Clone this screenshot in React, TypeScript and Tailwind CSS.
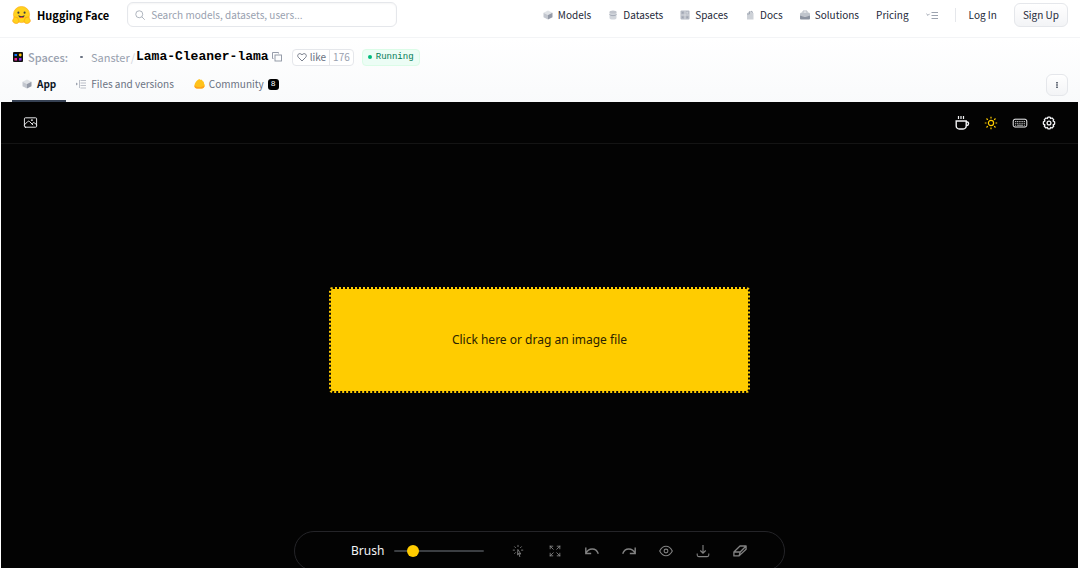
import React, { useState } from "react";
import { HiOutlinePhoto, HiOutlineCursorArrowRays, HiOutlineArrowsPointingOut } from "react-icons/hi2";

function HuggingFaceLogo() {
  return (
    <svg viewBox="0 0 40 38" className="h-[18px] w-[19px] shrink-0" aria-hidden="true">
      <circle cx="20" cy="18" r="17" fill="#ffd21e" stroke="#ffae1c" strokeWidth="1.500" />
      <circle cx="13.5" cy="14" r="2.2" fill="#3a3b45" />
      <circle cx="26.5" cy="14" r="2.2" fill="#3a3b45" />
      <path d="M13.500 19c2 1.600 4 2.200 6.500 2.200s4.500-.6 6.500-2.200c0 4-2.600 6.500-6.500 6.500s-6.500-2.500-6.500-6.500Z" fill="#3a3b45" />
      <path d="M16.500 24.200c1-2 6-2 7 0-2 1.600-5 1.600-7 0Z" fill="#f94040" />
      <path d="M5 23c1.500-1 3 .2 3.500 2 .8-2 3-2 3.300 0l1.800 4c1.600 2.600.8 6-1.600 7.200-4 1.500-8 .3-10-3-1.500-2-.8-3.600.8-3.600-1.200-1.500-.4-3 1-3 .1-1.600.3-3 1.200-3.600Z" fill="#ffd21e" stroke="#ff9d0b" strokeWidth="1.400" />
      <path d="M35 23c-1.500-1-3 .2-3.500 2-.8-2-3-2-3.300 0l-1.800 4c-1.600 2.600-.8 6 1.600 7.200 4 1.500 8 .3 10-3 1.500-2 .8-3.600-.8-3.600 1.200-1.500.4-3-1-3-.1-1.600-.3-3-1.200-3.600Z" fill="#ffd21e" stroke="#ff9d0b" strokeWidth="1.400" />
    </svg>
  );
}

function CubeIcon() {
  return (
    <svg viewBox="0 0 20 20" className="size-2.5 shrink-0" aria-hidden="true">
      <path d="M10 1 19 5.500 10 10 1 5.500Z" fill="#e0e3e7" />
      <path d="M1 5.500 10 10v9l-9-4.500Z" fill="#c3c7cf" />
      <path d="M19 5.500 10 10v9l9-4.500Z" fill="#959ba8" />
    </svg>
  );
}

function DatabaseIcon() {
  return (
    <svg viewBox="0 0 20 20" className="size-2.5 shrink-0" aria-hidden="true">
      <path d="M3 4h14v12c0 4-14 4-14 0Z" fill="#d1d5db" />
      <ellipse cx="10" cy="4" rx="7" ry="3" fill="#c0c4cc" />
      <path d="M3 9c2 3 12 3 14 0" fill="none" stroke="#a5abb7" strokeWidth="2" />
    </svg>
  );
}

function GridIcon() {
  return (
    <svg viewBox="0 0 20 20" className="size-2.5 shrink-0" aria-hidden="true">
      <rect x="1" y="1" width="18" height="18" rx="2" fill="#b4b9c3" />
      <path d="M10 1v18M1 10h18" stroke="#dfe2e6" strokeWidth="1.500" />
      <path d="M4 4h3v3H4zM4 13h3v3H4zM13 13h3v3h-3z" fill="#a0a6b2" />
      <circle cx="14.500" cy="5.500" r="2" fill="#d1d5db" />
    </svg>
  );
}

function DocsIcon() {
  return (
    <svg viewBox="0 0 20 20" className="size-2.5 shrink-0" aria-hidden="true">
      <path d="M4 7 9 2h4l4 5v12H4Z" fill="#cdd1d7" />
      <path d="M9 3v5H4M12 2l4 3" fill="none" stroke="#9ca3af" strokeWidth="1.800" />
    </svg>
  );
}

function BriefcaseIcon() {
  return (
    <svg viewBox="0 0 20 20" className="size-2.5 shrink-0" aria-hidden="true">
      <path d="M6 6V2h8v4" fill="none" stroke="#b4b9c3" strokeWidth="2" />
      <rect x="0" y="5" width="20" height="8" rx="3" fill="#bfc4cc" />
      <path d="M0 11c6 3 14 3 20 0v6c0 1-1 2-2 2H2c-1 0-2-1-2-2Z" fill="#8b92a0" />
    </svg>
  );
}

function MenuLinesIcon() {
  return (
    <svg viewBox="0 0 12 10" className="h-2.5 w-3" fill="none" stroke="#9ca3af" aria-hidden="true">
      <path d="m.4 3.800 1.600 1.600 1.600-1.600M5.500 2.500H12M5.500 5.500H12M5.500 8.500H12" />
    </svg>
  );
}

function SpacesIcon() {
  return (
    <svg viewBox="0 0 20 20" className="size-2.5 shrink-0" aria-hidden="true">
      <rect width="20" height="20" rx="2" fill="#111" />
      <rect x="3" y="4" width="5" height="4" fill="#0f7bff" />
      <circle cx="14.500" cy="6" r="2.800" fill="#ffc400" />
      <rect x="3" y="12" width="5" height="5" fill="#f0289a" />
      <rect x="12" y="12" width="5" height="5" fill="#8b27e8" />
    </svg>
  );
}

function FilesIcon() {
  return (
    <svg viewBox="0 0 20 20" className="size-2.5 shrink-0" fill="none" stroke="#b4b9c3" strokeWidth="1.800" aria-hidden="true">
      <path d="M7 2v16M9 3h11M9 8h11M9 13h11M9 18h11" />
      <path d="m0 7 4 3-4 3Z" fill="#9ca3af" stroke="none" />
    </svg>
  );
}

function CommunityIcon() {
  return (
    <svg viewBox="0 0 22 20" className="h-2.5 w-[11px] shrink-0" aria-hidden="true">
      <path d="M1 12C1 9 5 3 9 1c2-1 4 0 4 1 3-1 4 1 4 2 3 1 3 3 3 5 3 4 1 10-4 10H6c-4 0-6-3-5-7Z" fill="#ffc21a" />
      <path d="M1 13c3 3 5 3 8 3 5 1 9-1 12-3 0 4-3 6-6 6H6c-3 0-5-2-5-6Z" fill="#ff9f1c" />
    </svg>
  );
}

function CopyIcon() {
  return (
    <svg viewBox="0 0 20 20" className="size-2.5" fill="none" stroke="#8b92a0" strokeWidth="1.800" aria-hidden="true">
      <rect x="6" y="6" width="13" height="12" />
      <path d="M3 13H1V1h12v2" />
    </svg>
  );
}

function HeartIcon() {
  return (
    <svg viewBox="0 0 20 20" className="size-2.5" fill="none" stroke="#6b7280" strokeWidth="1.800" aria-hidden="true">
      <path d="M10 18 2.500 10.500C-1 6 4.500 0 10 5.500 15.500 0 21 6 17.500 10.500Z" />
    </svg>
  );
}

function CoffeeIcon() {
  return (
    <svg viewBox="0 0 16 16" className="size-4" fill="none" stroke="currentColor" strokeWidth="1.400" aria-hidden="true">
      <path d="M2.200 6h10v5a3 3 0 0 1-3 3h-4a3 3 0 0 1-3-3ZM12.200 7h1.200c1.600 0 1.600 3.500-.4 3.500h-.8" />
      <path d="M4.500 1v3M7 1v3M9.500 1v3" strokeWidth="1.200" />
    </svg>
  );
}

function SunIcon() {
  return (
    <svg viewBox="0 0 14 14" className="size-3.5" fill="none" stroke="currentColor" strokeWidth="1.200" aria-hidden="true">
      <circle cx="7" cy="7" r="2.600" />
      <path d="M7 .8v1.700M7 11.500v1.700M.8 7h1.700M11.500 7h1.700M2.500 2.500l1.300 1.300M10.200 10.200l1.300 1.300M2.500 11.500l1.300-1.300M10.200 3.800l1.300-1.300" />
    </svg>
  );
}

function KeyboardIcon() {
  return (
    <svg viewBox="0 0 16 16" className="size-4" fill="none" stroke="currentColor" aria-hidden="true">
      <rect x="1.200" y="4.200" width="13.600" height="7.800" rx="1.800" />
      <path d="M3 6.500h10M3 8.300h10" strokeDasharray="1.200 .6" opacity=".75" />
      <path d="M3 10.200h1.200M5 10.200h6M11.800 10.200H13" opacity=".75" />
    </svg>
  );
}

function GearIcon() {
  return (
    <svg viewBox="0 0 14 14" className="size-3.5" fill="none" stroke="currentColor" strokeWidth="1.300" strokeLinejoin="round" aria-hidden="true">
      <path d="M5.900 1.200h2.200l.5 1.300 1.400-.5 1.700 1.600-.6 1.400 1.500.9v2.200l-1.500.8.6 1.400-1.700 1.700-1.400-.6-.5 1.400H5.900l-.5-1.400-1.400.6L2.300 10.300l.6-1.400-1.500-.8V5.900L2.900 5l-.6-1.400L4 2l1.400.5Z" />
      <circle cx="7" cy="7" r="1.900" />
    </svg>
  );
}

function UndoIcon() {
  return (
    <svg viewBox="0 0 14 14" className="size-3.5" fill="none" stroke="currentColor" strokeWidth="1.400" aria-hidden="true">
      <path d="M.8 3.500v6h5.400M.8 9.300C3.500 3.800 11 3 13.300 9.800" />
    </svg>
  );
}

function RedoIcon() {
  return (
    <svg viewBox="0 0 14 14" className="size-3.5" fill="none" stroke="currentColor" strokeWidth="1.400" aria-hidden="true">
      <path d="M13.200 3.500v6H7.800M13.200 9.300C10.500 3.800 3 3 .7 9.800" />
    </svg>
  );
}

function EyeIcon() {
  return (
    <svg viewBox="0 0 14 14" className="size-3.5" fill="none" stroke="currentColor" strokeWidth="1.100" aria-hidden="true">
      <path d="M.7 7C2.500 3.500 4.700 2.300 7 2.300S11.500 3.500 13.300 7C11.500 10.500 9.300 11.700 7 11.700S2.500 10.500.7 7Z" />
      <circle cx="7" cy="7" r="1.900" />
    </svg>
  );
}

function DownloadIcon() {
  return (
    <svg viewBox="0 0 14 14" className="size-3.5" fill="none" stroke="currentColor" strokeWidth="1.100" aria-hidden="true">
      <path d="M7 1v8M4.300 6.500 7 9.200l2.700-2.700M1.200 9.500v1.500c0 1 .6 1.600 1.500 1.600h8.600c.9 0 1.500-.6 1.500-1.600V9.500" />
    </svg>
  );
}

function EraserIcon() {
  return (
    <svg viewBox="0 0 14 14" className="size-3.5" fill="none" stroke="currentColor" strokeWidth="1.300" strokeLinejoin="round" aria-hidden="true">
      <path d="M.9 8 7 2h6.100L7.200 8ZM.9 8v3.900h5.200L13.100 5.300V2M7.200 8l-1.100 3.900" />
    </svg>
  );
}

const navItems = [
  { label: "Models", Icon: CubeIcon },
  { label: "Datasets", Icon: DatabaseIcon },
  { label: "Spaces", Icon: GridIcon },
  { label: "Docs", Icon: DocsIcon },
  { label: "Solutions", Icon: BriefcaseIcon },
];

const tools = [
  { label: "Interactive segmentation", Icon: HiOutlineCursorArrowRays },
  { label: "Reset zoom", Icon: HiOutlineArrowsPointingOut },
  { label: "Undo", Icon: UndoIcon },
  { label: "Redo", Icon: RedoIcon },
  { label: "Show original", Icon: EyeIcon },
  { label: "Download", Icon: DownloadIcon },
  { label: "Erase", Icon: EraserIcon },
];

function SiteHeader() {
  return (
    <header className="flex h-[38px] shrink-0 items-center border-b border-gray-100 px-3 pb-2">
      <a href="#home" className="flex shrink-0 items-center gap-1.5 text-[11px] font-bold text-black">
        <HuggingFaceLogo />
        Hugging Face
      </a>
      <label className="ml-[18px] flex h-[25px] w-[270px] items-center gap-1.5 rounded-md border border-gray-200 px-[7px] shadow-[inset_0_1px_2px_#0000000a]">
        <svg viewBox="0 0 20 20" className="size-2.5 shrink-0" fill="none" stroke="#9ca3af" strokeWidth="1.600" aria-hidden="true">
          <circle cx="8.500" cy="8.500" r="7" />
          <path d="m13.500 13.500 6 6" />
        </svg>
        <input type="search" aria-label="Search" placeholder="Search models, datasets, users..." className="w-full bg-transparent text-[10px] outline-none placeholder:text-gray-400" />
      </label>
      <nav className="ml-auto flex items-center gap-[17px] text-[10px] text-gray-800">
        {navItems.map(({ label, Icon }) => (
          <a key={label} href={"#" + label.toLowerCase()} className="flex items-center gap-[5px]">
            <Icon />
            {label}
          </a>
        ))}
        <a href="#pricing">Pricing</a>
        <button type="button" aria-label="More" className="flex"><MenuLinesIcon /></button>
        <span className="h-3.5 w-px bg-gray-200" />
        <a href="#login" className="-ml-1">Log In</a>
        <a href="#signup" className="flex h-6 items-center rounded-md border border-gray-200 bg-linear-to-b from-white to-gray-100 px-2">Sign Up</a>
      </nav>
    </header>
  );
}

function SpaceHeader() {
  return (
    <section className="flex h-16 shrink-0 flex-col bg-linear-to-b from-white to-gray-50 px-3 pt-2.5">
      <div className="flex h-[18px] items-center pl-px text-[11px]">
        <SpacesIcon />
        <span className="ml-[5px] font-medium text-gray-400">Spaces:</span>
        <span className="mr-2 ml-3 h-0.5 w-[3px] rounded-full bg-gray-500" />
        <a href="#sanster" className="text-gray-400">Sanster</a>
        <span className="mx-px text-gray-300">/</span>
        <h1 className="font-['Liberation_Mono',monospace] text-[13px] font-bold text-black">Lama-Cleaner-lama</h1>
        <button type="button" aria-label="Copy name" className="ml-[3px]"><CopyIcon /></button>
        <div className="ml-2.5 flex h-[17px] items-center rounded border border-gray-200 bg-white text-[10px]">
          <button type="button" className="flex items-center gap-[3px] pr-[3px] pl-1 text-gray-500"><HeartIcon />like</button>
          <span className="flex h-full items-center border-l border-gray-200 px-[3px] text-gray-400">176</span>
        </div>
        <span className="ml-2 flex h-[17px] items-center gap-1 rounded border border-green-100 bg-emerald-50 px-[5px] font-['Liberation_Mono',monospace] text-[9px] text-emerald-700">
          <span className="size-1 rounded-full bg-emerald-500" />
          Running
        </span>
      </div>
      <div className="mt-0.5 flex grow items-stretch text-[10px] text-gray-500">
        <a href="#app" className="flex items-center gap-[5px] border-b-2 border-gray-700 px-2.5 font-bold text-gray-900"><CubeIcon />App</a>
        <a href="#files" className="flex items-center gap-[5px] border-b-2 border-transparent px-2.5"><FilesIcon />Files and versions</a>
        <a href="#community" className="flex items-center gap-1 border-b-2 border-transparent px-2.5">
          <CommunityIcon />Community
          <span className="flex size-[11px] items-center justify-center rounded-[3px] bg-black font-['Liberation_Mono',monospace] text-[8px] text-white">8</span>
        </a>
        <button type="button" aria-label="Options" className="ml-auto flex size-[22px] items-center justify-center self-center rounded-md border border-gray-200 bg-linear-to-b from-white to-gray-100">
          <svg viewBox="0 0 2 8" className="h-1.5 w-0.5" fill="#374151" aria-hidden="true"><path d="M0 0h2v2H0zM0 3h2v2H0zM0 6h2v2H0z" /></svg>
        </button>
      </div>
    </section>
  );
}

export default function App() {
  const [brush, setBrush] = useState(16);
  return (
    <div className="flex h-screen flex-col overflow-hidden bg-white font-['Noto_Sans_CJK_SC',sans-serif] leading-4">
      <SiteHeader />
      <SpaceHeader />
      <main className="mr-0.5 ml-px flex min-h-0 grow flex-col overflow-hidden bg-[#030303] font-['Noto_Sans',sans-serif]">
        <div className="flex h-[42px] shrink-0 items-center justify-between border-b border-[#141414] px-[22px] text-gray-100">
          <button type="button" aria-label="Upload image"><HiOutlinePhoto className="size-[15px]" /></button>
          <div className="flex items-center gap-3.5">
            <a href="#coffee" aria-label="Buy me a coffee"><CoffeeIcon /></a>
            <button type="button" aria-label="Toggle theme" className="text-[#ffcc00]"><SunIcon /></button>
            <button type="button" aria-label="Shortcuts"><KeyboardIcon /></button>
            <button type="button" aria-label="Settings"><GearIcon /></button>
          </div>
        </div>
        <div className="flex grow items-center justify-center pt-1">
          <label className="flex h-[106px] w-[421px] cursor-pointer items-center justify-center rounded border-2 border-dotted border-[#030303] bg-[#ffcc00] text-[12px] text-[#2b2300]">
            Click here or drag an image file
            <input type="file" className="sr-only" />
          </label>
        </div>
        <div className="-mb-[3px] flex h-10 w-[491px] shrink-0 items-center self-center rounded-full border border-[#242428] pr-9 pl-14 text-[#828282]">
          <label htmlFor="brush" className="text-[12px] text-gray-100">Brush</label>
          <input
            id="brush"
            type="range"
            value={brush}
            onChange={(event) => setBrush(Number(event.target.value))}
            className="ml-2.5 h-3 w-[90px] appearance-none bg-transparent [&::-webkit-slider-runnable-track]:h-0.5 [&::-webkit-slider-runnable-track]:rounded-full [&::-webkit-slider-runnable-track]:bg-[#3b3e42] [&::-webkit-slider-thumb]:-mt-[5px] [&::-webkit-slider-thumb]:size-3 [&::-webkit-slider-thumb]:appearance-none [&::-webkit-slider-thumb]:rounded-full [&::-webkit-slider-thumb]:bg-[#ffcc00]"
          />
          <div className="ml-[27px] flex items-center gap-[23px]">
            {tools.map(({ label, Icon }) => (
              <button key={label} type="button" aria-label={label}><Icon className="size-3.5" /></button>
            ))}
          </div>
        </div>
      </main>
    </div>
  );
}
